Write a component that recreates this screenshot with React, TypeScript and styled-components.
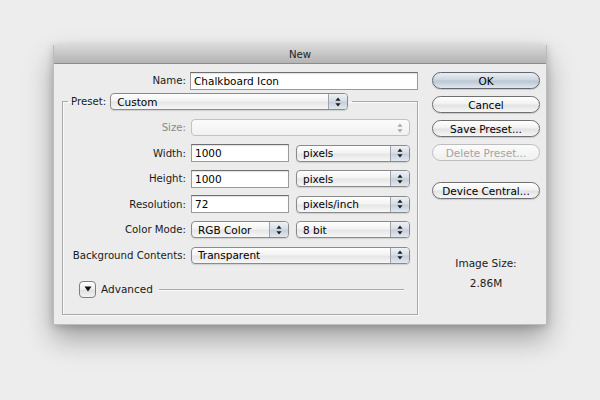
import React from "react";
import styled, { createGlobalStyle, css } from "styled-components";

const GlobalStyle = createGlobalStyle`
  html, body {
    margin: 0;
    padding: 0;
    background: #ededed;
  }
  body {
    font-family: "DejaVu Sans", "Liberation Sans", sans-serif;
    font-size: 10.2px;
    color: #1a1a1a;
  }
`;

const Page = styled.div`
  width: 600px;
  height: 400px;
  padding-top: 45px;
  padding-left: 53px;
  box-sizing: border-box;
`;

const Window = styled.div`
  width: 494px;
  background: #ececec;
  border: 1px solid #bcbcbc;
  border-top: none;
  box-sizing: border-box;
  box-shadow: 0 14px 26px rgba(0, 0, 0, 0.32), 0 2px 8px rgba(0, 0, 0, 0.18);
`;

const TitleBar = styled.div`
  height: 18px;
  display: flex;
  align-items: center;
  justify-content: center;
  background: linear-gradient(#d9d9d9, #c2c2c2 60%, #b4b4b4);
  border-bottom: 1px solid #8c8c8c;
  color: #222;
`;

const Body = styled.div`
  display: flex;
  padding: 8px 6px 9px 8px;
`;

const LeftColumn = styled.div`
  width: 356px;
  display: flex;
  flex-direction: column;
`;

const RightColumn = styled.div`
  width: 110px;
  margin-left: 14px;
  display: flex;
  flex-direction: column;
  align-items: stretch;
`;

const Row = styled.div`
  display: flex;
  align-items: center;
  height: 17px;
`;

const Label = styled.span<{ $disabled?: boolean }>`
  width: 124px;
  margin-right: 4px;
  text-align: right;
  white-space: nowrap;
  color: ${(p) => (p.$disabled ? "#8a8a8a" : "#1a1a1a")};
`;

const TextInput = styled.div<{ $w: number }>`
  width: ${(p) => p.$w}px;
  height: 18px;
  box-sizing: border-box;
  background: #fff;
  border: 1px solid #9a9a9a;
  border-top-color: #6f6f6f;
  box-shadow: inset 0 1px 1px rgba(0, 0, 0, 0.12);
  padding: 0 3px;
  display: flex;
  align-items: center;
  color: #000;
  white-space: nowrap;
  overflow: hidden;
  font-size: 10.5px;
`;

const PopUp = styled.div<{ $w: number; $disabled?: boolean }>`
  width: ${(p) => p.$w}px;
  height: 17px;
  box-sizing: border-box;
  border: 1px solid #8a8a8a;
  border-radius: 4px;
  display: flex;
  overflow: hidden;
  background: linear-gradient(#ffffff, #f3f3f3 45%, #e6e6e6 55%, #f7f7f7);
  box-shadow: 0 1px 1px rgba(0, 0, 0, 0.12);
  color: #000;
  font-size: 10.5px;
  ${(p) =>
    p.$disabled &&
    css`
      border-color: #c2c2c2;
      background: linear-gradient(#fbfbfb, #f1f1f1);
      box-shadow: none;
    `}
`;

const PopUpText = styled.span`
  flex: 1;
  display: flex;
  align-items: center;
  padding-left: 6px;
  white-space: nowrap;
`;

const PopUpArrows = styled.span<{ $disabled?: boolean }>`
  width: 18px;
  display: flex;
  align-items: center;
  justify-content: center;
  border-left: 1px solid #9aa3ae;
  background: linear-gradient(#eef2f7, #d6dde6 48%, #c4ceda 52%, #e2e8ef);
  ${(p) =>
    p.$disabled &&
    css`
      border-left-color: transparent;
      background: transparent;
    `}
`;

const Arrows = ({ color }: { color: string }) => (
  <svg width="6" height="10" viewBox="0 0 6 10">
    <path d="M3 0.5 L5.6 3.8 H0.4 Z" fill={color} />
    <path d="M3 9.5 L5.6 6.2 H0.4 Z" fill={color} />
  </svg>
);

const Select = ({
  w,
  value,
  disabled,
}: {
  w: number;
  value?: string;
  disabled?: boolean;
}) => (
  <PopUp $w={w} $disabled={disabled}>
    <PopUpText>{value}</PopUpText>
    <PopUpArrows $disabled={disabled}>
      <Arrows color={disabled ? "#a8a8a8" : "#1c1c1c"} />
    </PopUpArrows>
  </PopUp>
);

const Group = styled.fieldset`
  margin: 4px 0 0 0;
  padding: 9px 0 16px 0;
  border: 1px solid #a9a9a9;
  box-shadow: inset 1px 1px 0 #fafafa, 1px 1px 0 #fafafa;
  display: flex;
  flex-direction: column;
  gap: 8.6px;
`;

const Legend = styled.legend`
  margin-left: 5px;
  padding: 0 4px 0 3px;
  display: flex;
  align-items: center;
`;

const LegendLabel = styled.span`
  margin-right: 4px;
`;

const GroupLabel = styled(Label)`
  width: 123px;
  margin-right: 5px;
`;

const Spacer = styled.span`
  width: 7px;
`;

const AdvancedRow = styled.div`
  display: flex;
  align-items: center;
  margin-top: 8px;
  padding-left: 16px;
  padding-right: 13px;
`;

const Disclosure = styled.span`
  width: 17px;
  height: 17px;
  box-sizing: border-box;
  border: 1px solid #7e7e7e;
  border-radius: 4px;
  background: linear-gradient(#ffffff, #ececec 50%, #dedede 52%, #f3f3f3);
  display: flex;
  align-items: center;
  justify-content: center;
  margin-right: 5px;
`;

const AdvancedText = styled.span`
  white-space: nowrap;
  margin-right: 6px;
  font-size: 10.5px;
`;

const Rule = styled.span`
  flex: 1;
  height: 1px;
  background: #a9a9a9;
  box-shadow: 0 1px 0 #fafafa;
`;

const Button = styled.div<{ $default?: boolean; $disabled?: boolean; $gap?: number }>`
  height: 17px;
  box-sizing: border-box;
  margin-top: ${(p) => p.$gap ?? 0}px;
  border: 1px solid #6f6f6f;
  border-radius: 9px;
  display: flex;
  align-items: center;
  justify-content: center;
  background: linear-gradient(#ffffff, #f1f1f1 48%, #e2e2e2 52%, #f6f6f6);
  box-shadow: 0 1px 1px rgba(0, 0, 0, 0.15);
  color: #000;
  white-space: nowrap;
  font-size: 10.5px;
  ${(p) =>
    p.$default &&
    css`
      border-color: #5f6772;
      background: linear-gradient(#e9eef4, #ccd5e0 48%, #bac6d4 52%, #dfe6ee);
    `}
  ${(p) =>
    p.$disabled &&
    css`
      border-color: #bdbdbd;
      color: #a3a3a3;
      box-shadow: none;
      background: linear-gradient(#fbfbfb, #f0f0f0);
    `}
`;

const SizeInfo = styled.div`
  margin-top: 58px;
  display: flex;
  flex-direction: column;
  align-items: center;
  gap: 8px;
  color: #1a1a1a;
  font-size: 10.5px;
`;

export default function App() {
  return (
    <>
      <GlobalStyle />
      <Page>
        <Window>
          <TitleBar>New</TitleBar>
          <Body>
            <LeftColumn>
              <Row>
                <Label>Name:</Label>
                <TextInput $w={228}>Chalkboard Icon</TextInput>
              </Row>
              <Group>
                <Legend>
                  <LegendLabel>Preset:</LegendLabel>
                  <Select w={238} value="Custom" />
                </Legend>
                <Row>
                  <GroupLabel $disabled>Size:</GroupLabel>
                  <Select w={219} disabled />
                </Row>
                <Row>
                  <GroupLabel>Width:</GroupLabel>
                  <TextInput $w={98}>1000</TextInput>
                  <Spacer />
                  <Select w={114} value="pixels" />
                </Row>
                <Row>
                  <GroupLabel>Height:</GroupLabel>
                  <TextInput $w={98}>1000</TextInput>
                  <Spacer />
                  <Select w={114} value="pixels" />
                </Row>
                <Row>
                  <GroupLabel>Resolution:</GroupLabel>
                  <TextInput $w={98}>72</TextInput>
                  <Spacer />
                  <Select w={114} value="pixels/inch" />
                </Row>
                <Row>
                  <GroupLabel>Color Mode:</GroupLabel>
                  <Select w={98} value="RGB Color" />
                  <Spacer />
                  <Select w={114} value="8 bit" />
                </Row>
                <Row>
                  <GroupLabel>Background Contents:</GroupLabel>
                  <Select w={219} value="Transparent" />
                </Row>
                <AdvancedRow>
                  <Disclosure>
                    <svg width="8" height="6" viewBox="0 0 8 6">
                      <path d="M0.5 0.5 H7.5 L4 5.5 Z" fill="#111" />
                    </svg>
                  </Disclosure>
                  <AdvancedText>Advanced</AdvancedText>
                  <Rule />
                </AdvancedRow>
              </Group>
            </LeftColumn>
            <RightColumn>
              <Button $default>OK</Button>
              <Button $gap={7}>Cancel</Button>
              <Button $gap={7}>Save Preset...</Button>
              <Button $gap={7} $disabled>
                Delete Preset...
              </Button>
              <Button $gap={21}>Device Central...</Button>
              <SizeInfo>
                <span>Image Size:</span>
                <span>2.86M</span>
              </SizeInfo>
            </RightColumn>
          </Body>
        </Window>
      </Page>
    </>
  );
}
